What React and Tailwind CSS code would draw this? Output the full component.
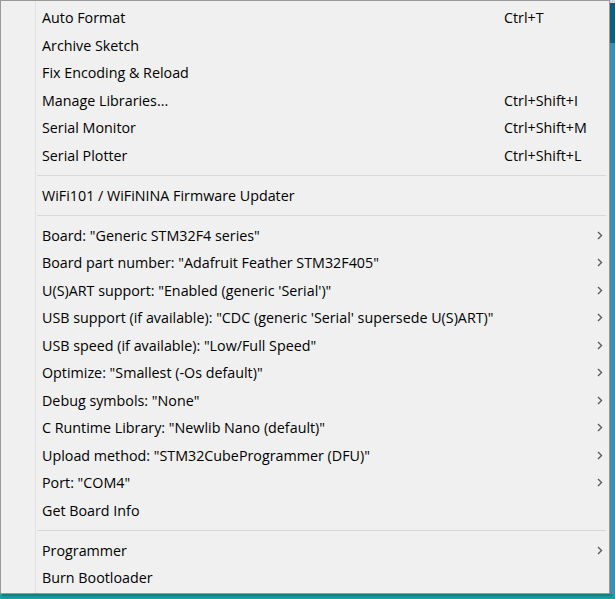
import React from "react";

const groups = [
  [
    ["Auto Format", "Ctrl+T"],
    ["Archive Sketch"],
    ["Fix Encoding & Reload"],
    ["Manage Libraries...", "Ctrl+Shift+I"],
    ["Serial Monitor", "Ctrl+Shift+M"],
    ["Serial Plotter", "Ctrl+Shift+L"],
  ],
  [["WiFi101 / WiFiNINA Firmware Updater"]],
  [
    ['Board: "Generic STM32F4 series"', null, true],
    ['Board part number: "Adafruit Feather STM32F405"', null, true],
    ["U(S)ART support: \"Enabled (generic 'Serial')\"", null, true],
    ["USB support (if available): \"CDC (generic 'Serial' supersede U(S)ART)\"", null, true],
    ['USB speed (if available): "Low/Full Speed"', null, true],
    ['Optimize: "Smallest (-Os default)"', null, true],
    ['Debug symbols: "None"', null, true],
    ['C Runtime Library: "Newlib Nano (default)"', null, true],
    ['Upload method: "STM32CubeProgrammer (DFU)"', null, true],
    ['Port: "COM4"', null, true],
    ["Get Board Info"],
  ],
  [["Programmer", null, true], ["Burn Bootloader"]],
];

function Chevron() {
  return (
    <svg width="6" height="9" viewBox="0 0 6 9" className="mr-[6px]">
      <path d="M1 1 L4.5 4.5 L1 8" fill="none" stroke="#5c5c5c" strokeWidth="1.4" />
    </svg>
  );
}

function Row({ label, shortcut, sub }) {
  return (
    <div className="flex items-center h-[27.5px] pl-[6px]">
      <div className="w-[462px] shrink-0 whitespace-nowrap">{label}</div>
      <div className="flex-1 whitespace-nowrap">{shortcut}</div>
      {sub ? <Chevron /> : null}
    </div>
  );
}

export default function App() {
  return (
    <div
      className="w-[615px] h-[599px] bg-[#1c9ea3] overflow-hidden text-[14.3px] text-black"
      style={{ fontFamily: '"Open Sans", "Noto Sans", sans-serif' }}
    >
      <div className="flex h-[594px]">
        <div className="w-[610px] h-full border border-[#999999] bg-[#f0f0f0] flex shadow-[2px_2px_2px_rgba(0,0,0,0.25)]">
          <div className="w-[35px] shrink-0 border-r border-[#e2e2e2]" />
          <div className="flex-1 flex flex-col pt-[3px]">
            {groups.map((g, gi) => (
              <React.Fragment key={gi}>
                {gi > 0 ? (
                  <div className="h-[12.5px] flex items-center ml-[1px] mr-[3px]">
                    <div className="h-px w-full bg-[#d7d7d7]" />
                  </div>
                ) : null}
                {g.map(([l, s, sub]) => (
                  <Row key={l} label={l} shortcut={s} sub={sub} />
                ))}
              </React.Fragment>
            ))}
          </div>
        </div>
        <div className="flex-1 flex flex-col">
          <div className="h-[3px] bg-[#d9d9d9]" />
          <div className="h-[40px] bg-[#0f5f7c]" />
          <div className="flex-1 bg-[#3b8fb0]" />
        </div>
      </div>
    </div>
  );
}
